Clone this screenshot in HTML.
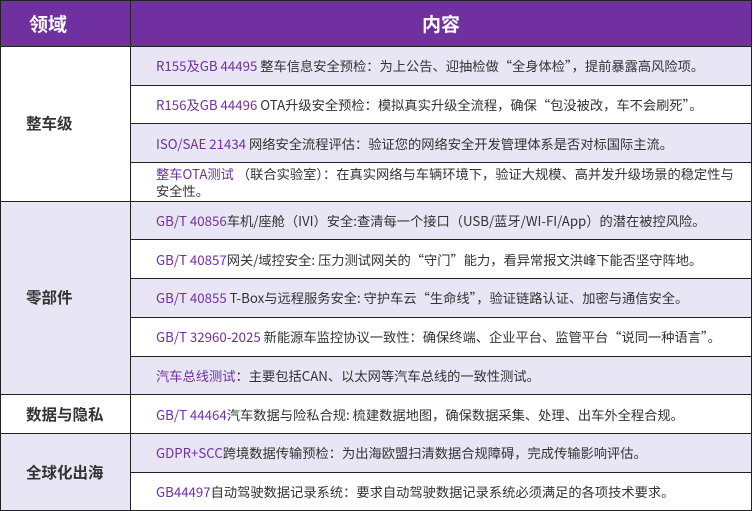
<!DOCTYPE html>
<html><head><meta charset="utf-8"><style>
*{margin:0;padding:0;box-sizing:border-box}
body{width:753px;height:511px;background:#fff;font-family:"Noto Sans CJK SC","Liberation Sans",sans-serif;}
table{border-collapse:collapse;position:absolute;left:0;top:0;width:752px;}
td,th{border:1px solid #222;font-size:13.25px;color:#333;line-height:17px;}
th{background:#7030a0;color:#fff;font-size:19px;font-weight:bold;height:46px;}
th.l{text-align:left;padding-left:28px}
td.l{width:130px;font-weight:bold;font-size:15.5px;padding-left:25px;color:#333}
td.r{padding-left:25px;padding-right:12px;height:38.7px}
.lv{background:#e8e6f4}
.p{color:#7030a0}
</style></head><body>
<table>
<tr><th class="l">领域</th><th>内容</th></tr>
<tr><td class="l" rowspan="4">整车级</td><td class="r lv"><span class="p">R155及GB 44495</span> 整车信息安全预检：为上公告、迎抽检做“全身体检”，提前暴露高风险项。</td></tr>
<tr><td class="r"><span class="p">R156及GB 44496</span> OTA升级安全预检：模拟真实升级全流程，确保“包没被改，车不会刷死”。</td></tr>
<tr><td class="r lv"><span class="p">ISO/SAE 21434</span> 网络安全流程评估：验证您的网络安全开发管理体系是否对标国际主流。</td></tr>
<tr><td class="r"><span class="p">整车OTA测试</span> （联合实验室）：在真实网络与车辆环境下，验证大规模、高并发升级场景的稳定性与<br>安全性。</td></tr>
<tr><td class="l lv" rowspan="5">零部件</td><td class="r lv"><span class="p">GB/T 40856</span>车机/座舱（IVI）安全:查清每一个接口（USB/蓝牙/WI-FI/App）的潜在被控风险。</td></tr>
<tr><td class="r"><span class="p">GB/T 40857</span>网关/域控安全: 压力测试网关的“守门”能力，看异常报文洪峰下能否坚守阵地。</td></tr>
<tr><td class="r lv"><span class="p">GB/T 40855</span> T-Box与远程服务安全: 守护车云“生命线”，验证链路认证、加密与通信安全。</td></tr>
<tr><td class="r"><span class="p">GB/T 32960-2025</span> 新能源车监控协议一致性：确保终端、企业平台、监管平台“说同一种语言”。</td></tr>
<tr><td class="r lv"><span class="p">汽车总线测试</span>：主要包括CAN、以太网等汽车总线的一致性测试。</td></tr>
<tr><td class="l">数据与隐私</td><td class="r"><span class="p">GB/T 44464</span>汽车数据与险私合规: 梳建数据地图，确保数据采集、处理、出车外全程合规。</td></tr>
<tr><td class="l lv" rowspan="2">全球化出海</td><td class="r lv"><span class="p">GDPR+SCC</span>跨境数据传输预检：为出海欧盟扫清数据合规障碍，完成传输影响评估。</td></tr>
<tr><td class="r"><span class="p">GB44497</span>自动驾驶数据记录系统：要求自动驾驶数据记录系统必须满足的各项技术要求。</td></tr>
</table>
</body></html>
